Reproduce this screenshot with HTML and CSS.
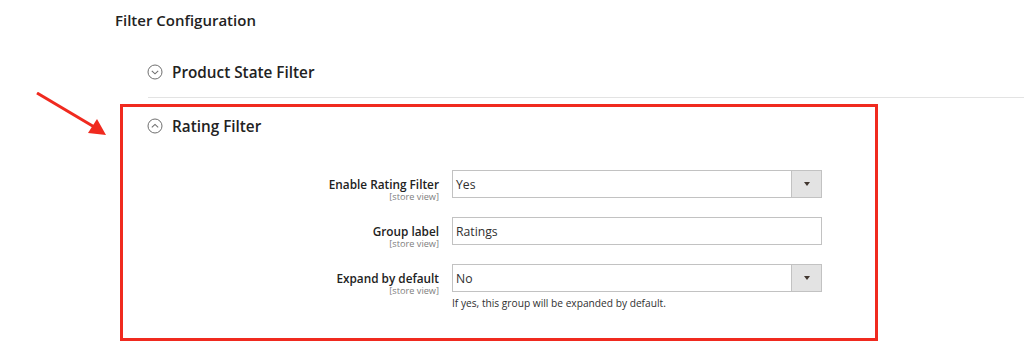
FILE: index.html
```html
<!DOCTYPE html>
<html>
<head>
<meta charset="utf-8">
<link rel="stylesheet" href="styles.css">
</head>
<body>
<div class="page">
  <h1 class="title">Filter Configuration</h1>
  <div class="section collapsed">
    <div class="section-head">
      <svg class="toggle" width="16" height="16" viewBox="0 0 16 16"><circle cx="8" cy="8" r="7" fill="none" stroke="#6f6f6f" stroke-width="1"/><path d="M4.8 6.8 L8 9.8 L11.2 6.8" fill="none" stroke="#6f6f6f" stroke-width="1.1"/></svg>
      <span>Product State Filter</span>
    </div>
  </div>
  <div class="highlight">
    <div class="section-head open">
      <svg class="toggle" width="16" height="16" viewBox="0 0 16 16"><circle cx="8" cy="8" r="7" fill="none" stroke="#6f6f6f" stroke-width="1"/><path d="M4.8 9.4 L8 6.4 L11.2 9.4" fill="none" stroke="#6f6f6f" stroke-width="1.1"/></svg>
      <span>Rating Filter</span>
    </div>
    <div class="form">
      <div class="row">
        <div class="label"><span class="name">Enable Rating Filter</span><span class="scope">[store view]</span></div>
        <div class="control">
          <div class="select"><span class="value">Yes</span><span class="btn"><i class="tri"></i></span></div>
        </div>
      </div>
      <div class="row">
        <div class="label"><span class="name">Group label</span><span class="scope">[store view]</span></div>
        <div class="control">
          <div class="input"><span class="value">Ratings</span></div>
        </div>
      </div>
      <div class="row">
        <div class="label"><span class="name">Expand by default</span><span class="scope">[store view]</span></div>
        <div class="control">
          <div class="select"><span class="value">No</span><span class="btn"><i class="tri"></i></span></div>
          <div class="note">If yes, this group will be expanded by default.</div>
        </div>
      </div>
    </div>
  </div>
  <svg class="arrow" width="80" height="50" viewBox="0 0 80 50"><line x1="1" y1="1" x2="60" y2="36" stroke="#f02a1f" stroke-width="3"/><polygon points="70,43 52,41 61,27" fill="#f02a1f"/></svg>
</div>
</body>
</html>
```
FILE: styles.css
```css
html, body {
  margin: 0;
  padding: 0;
  background: #fff;
}
body {
  font-family: "Open Sans", "Noto Sans", sans-serif;
  color: #303030;
  width: 1024px;
  height: 361px;
  overflow: hidden;
}
.page {
  position: relative;
}
.title {
  margin: 0;
  padding: 9px 0 0 115px;
  font-size: 15px;
  line-height: 22px;
  font-weight: 600;
  color: #222;
}
.section {
  margin: 29px 0 0 148px;
  border-bottom: 1px solid #e3e3e3;
  padding-bottom: 13px;
}
.section-head {
  display: flex;
  align-items: center;
  gap: 8px;
  font-size: 15.3px;
  font-weight: 600;
  line-height: 24px;
  color: #222;
}
.section .section-head {
  margin-left: -1px;
}
.highlight .section-head span,
.section .section-head span {
  margin-left: 1px;
}
.toggle {
  flex: none;
}
.highlight {
  margin: 6px 0 0 120px;
  width: 752px;
  height: 231px;
  border: 3px solid #f02a1f;
}
.highlight .section-head {
  margin: 7px 0 0 24px;
}
.form {
  margin-top: 32px;
  display: flex;
  flex-direction: column;
  gap: 19px;
}
.row {
  display: grid;
  grid-template-columns: 316px 370px;
  column-gap: 13px;
  align-items: start;
}
.label {
  display: flex;
  flex-direction: column;
  align-items: flex-end;
  padding-top: 6px;
  margin-bottom: -6px;
}
.name {
  font-size: 11.8px;
  font-weight: 600;
  line-height: 16px;
  color: #222;
}
.scope {
  font-size: 9.2px;
  line-height: 10px;
  color: #808080;
}
.select, .input {
  box-sizing: border-box;
  height: 28px;
  border: 1px solid #c2c2c2;
  display: flex;
  align-items: center;
  font-size: 12.2px;
  color: #303030;
}
.value {
  flex: 1;
  padding-left: 3px;
}
.btn {
  box-sizing: border-box;
  width: 30px;
  height: 100%;
  background: #e3e3e3;
  border-left: 1px solid #c2c2c2;
  display: flex;
  align-items: center;
  justify-content: center;
}
.tri {
  width: 0;
  height: 0;
  border-left: 3.5px solid transparent;
  border-right: 3.5px solid transparent;
  border-top: 4px solid #41362f;
}
.note {
  margin-top: 4px;
  font-size: 10.2px;
  line-height: 14px;
  color: #303030;
}
.arrow {
  position: absolute;
  left: 36px;
  top: 92px;
}
```
